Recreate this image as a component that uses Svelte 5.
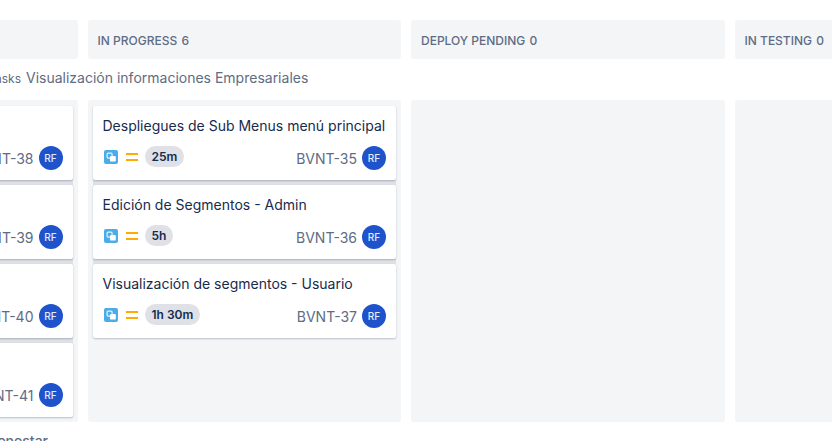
<script>
  const columns = [
    {
      name: 'To do',
      count: '',
      issues: [
        { key: 'BVNT-38' },
        { key: 'BVNT-39' },
        { key: 'BVNT-40' },
        { key: 'BVNT-41' }
      ]
    },
    {
      name: 'In progress',
      count: 6,
      issues: [
        { key: 'BVNT-35', title: 'Despliegues de Sub Menus menú principal', time: '25m' },
        { key: 'BVNT-36', title: 'Edición de Segmentos - Admin', time: '5h' },
        { key: 'BVNT-37', title: 'Visualización de segmentos - Usuario', time: '1h 30m' }
      ]
    },
    { name: 'Deploy pending', count: 0, issues: [] },
    { name: 'In testing', count: 0, issues: [] }
  ];
</script>

<main>
  <div class="board">
    <header class="row">
      {#each columns as column}
        <h2>{column.name} <span>{column.count}</span></h2>
      {/each}
    </header>

    <section>
      <div class="lane">
        <small>tasks</small>
        <h3>Visualización informaciones Empresariales</h3>
      </div>

      <div class="row">
        {#each columns as column}
          <div class="column">
            <div class="cards">
              {#each column.issues as issue}
                <article>
                  <h4>{issue.title ?? ''}</h4>
                  <div class="details">
                    {#if issue.time}
                      <svg class="type" viewBox="0 0 14 14" role="img" aria-label="Subtarea">
                        <rect width="14" height="14" rx="2" fill="#4bade8" />
                        <rect x="3.1" y="3.1" width="5" height="5" rx="1.2" fill="none" stroke="#e4f3fc" stroke-width="1.2" />
                        <rect x="6" y="6" width="5.8" height="5.6" rx="1.2" fill="#fff" />
                      </svg>
                      <svg class="priority" viewBox="0 0 12 14" role="img" aria-label="Prioridad media">
                        <path d="M0 3h12v2H0zM0 9h12v2H0z" fill="#ffab00" />
                      </svg>
                      <span class="time">{issue.time}</span>
                    {/if}
                    <span class="key">{issue.key}</span>
                    <span class="avatar">RF</span>
                  </div>
                </article>
              {/each}
            </div>
          </div>
        {/each}
      </div>
    </section>

    <section>
      <div class="lane next">
        <h3>Bienestar</h3>
      </div>
    </section>
  </div>
</main>

<style>
  :global(body) {
    margin: 0;
    background: #fff;
  }

  main {
    height: 100vh;
    overflow: hidden;
    font-family: Inter, "Liberation Sans", sans-serif;
    color: #172b4d;
  }

  /* the board is scrolled sideways, past most of its first column */
  .board {
    width: calc(100% + 452px);
    margin-left: -236px;
    padding-top: 20px;
  }

  .row {
    display: grid;
    grid-template-columns: repeat(4, 1fr);
    gap: 10px;
  }

  h2, h3, h4 {
    margin: 0;
  }

  h2 {
    padding: 13px 10px 10px;
    border-radius: 3px;
    background: #f4f5f7;
    color: #5e6c84;
    font-size: 12px;
    font-weight: 500;
    line-height: 16px;
    text-transform: uppercase;
  }

  h2 span {
    margin-left: 1px;
  }

  .lane {
    display: flex;
    align-items: baseline;
    gap: 5px;
    padding: 9px 0 11px;
    color: #5e6c84;
    line-height: 20px;
  }

  .lane small {
    width: 257px;
    font-size: 12px;
    text-align: right;
  }

  .lane h3 {
    font-size: 14px;
    font-weight: 400;
  }

  .next h3 {
    width: 284px;
    font-weight: 500;
    text-align: right;
  }

  .column {
    padding: 6px 5px 5px;
    border-radius: 3px;
    background: #f4f5f7;
  }

  .cards {
    display: flex;
    flex-direction: column;
    gap: 5px;
    border-radius: 2px;
    background: #dfe1e6;
  }

  article {
    padding: 10px;
    border-radius: 2px;
    background: #fff;
    box-shadow: 0 1px 2px rgba(9, 30, 66, 0.25);
  }

  h4 {
    min-height: 20px;
    margin-bottom: 10px;
    font-size: 14px;
    font-weight: 400;
    line-height: 20px;
  }

  .details {
    display: flex;
    align-items: center;
    height: 24px;
  }

  .type {
    width: 14px;
    height: 14px;
    margin: 0 8px 2px 1px;
  }

  .priority {
    width: 12px;
    height: 14px;
    margin: 0 7px 2px 0;
  }

  .time {
    margin-bottom: 3px;
    padding: 0 7px;
    border-radius: 11px;
    background: #dfe1e6;
    font-size: 12px;
    font-weight: 600;
    line-height: 21px;
  }

  .key {
    margin-left: auto;
    color: #5e6c84;
    font-size: 14px;
  }

  .avatar {
    width: 24px;
    margin-left: 5px;
    border-radius: 50%;
    background: #1f53cc;
    color: #e3ebfa;
    font-size: 10px;
    font-weight: 500;
    line-height: 24px;
    text-align: center;
  }
</style>
